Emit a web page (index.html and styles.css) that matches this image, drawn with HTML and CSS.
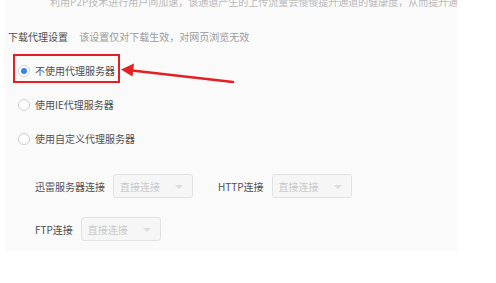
FILE: index.html
```html
<!DOCTYPE html>
<html lang="zh-CN">
<head>
<meta charset="utf-8">
<title>下载代理设置</title>
<link rel="stylesheet" href="styles.css">
</head>
<body>
<div class="page">
  <div class="panel">
    <div class="intro">利用P2P技术进行用户间加速，该通道产生的上传流量会慢慢提升通道的健康度，从而提升通道的加速效果</div>
    <div class="section-head">
      <span class="title">下载代理设置</span>
      <span class="hint">该设置仅对下载生效，对网页浏览无效</span>
    </div>
    <div class="radio-list">
      <div class="radio-row"><span class="radio checked"></span><span class="radio-label">不使用代理服务器</span></div>
      <div class="radio-row"><span class="radio"></span><span class="radio-label">使用IE代理服务器</span></div>
      <div class="radio-row"><span class="radio"></span><span class="radio-label">使用自定义代理服务器</span></div>
    </div>
    <div class="field-row first">
      <div class="field">
        <span class="field-label">迅雷服务器连接</span>
        <div class="select"><span class="select-text">直接连接</span><span class="caret"></span></div>
      </div>
      <div class="field spaced">
        <span class="field-label">HTTP连接</span>
        <div class="select"><span class="select-text">直接连接</span><span class="caret"></span></div>
      </div>
    </div>
    <div class="field-row second">
      <div class="field">
        <span class="field-label">FTP连接</span>
        <div class="select"><span class="select-text">直接连接</span><span class="caret"></span></div>
      </div>
    </div>
  </div>
  <div class="mark-box"></div>
  <svg class="mark-arrow" width="130" height="30" viewBox="0 0 130 30">
    <line x1="113" y1="26" x2="12" y2="14.5" stroke="#e51f26" stroke-width="2.6" stroke-linecap="round"/>
    <polygon points="1,13.5 14,7.5 12.5,20.5" fill="#e51f26"/>
  </svg>
</div>
</body>
</html>
```
FILE: styles.css
```css
html, body {
  margin: 0;
  padding: 0;
  background: #ffffff;
}
body {
  font-family: "Noto Sans CJK SC", "Noto Sans", sans-serif;
  font-size: 10px;
  color: #505050;
}
.page {
  position: relative;
  width: 496px;
  height: 283px;
}
.panel {
  margin-left: 5px;
  width: 452px;
  height: 251px;
  background: #fafafa;
  overflow: hidden;
}
.intro {
  margin-top: -5px;
  padding-left: 45px;
  line-height: 14px;
  height: 14px;
  white-space: nowrap;
  color: #b9b9b9;
}
.section-head {
  margin-top: 21px;
  padding-left: 3px;
  line-height: 14px;
  height: 14px;
  white-space: nowrap;
}
.section-head .title {
  color: #505050;
}
.section-head .hint {
  margin-left: 9px;
  color: #9a9a9a;
}
.radio-list {
  margin-top: 17px;
  padding-left: 13px;
  display: flex;
  flex-direction: column;
  gap: 14px;
}
.radio-row {
  display: flex;
  align-items: center;
  height: 20px;
  gap: 5px;
}
.radio {
  box-sizing: border-box;
  width: 12px;
  height: 12px;
  border-radius: 50%;
  border: 1px solid #cfcfcf;
  background: #fff;
  display: flex;
  align-items: center;
  justify-content: center;
}
.radio.checked {
  border-color: #d6d6d6;
}
.radio.checked::after {
  content: "";
  width: 6px;
  height: 6px;
  border-radius: 50%;
  background: #3b7ff2;
}
.radio-label {
  color: #505050;
  line-height: 14px;
}
.field-row {
  display: flex;
  align-items: center;
  padding-left: 30px;
  height: 24px;
}
.field-row.first {
  margin-top: 25px;
}
.field-row.second {
  margin-top: 19px;
}
.field {
  display: flex;
  align-items: center;
  gap: 8px;
}
.field.spaced {
  margin-left: 25px;
}
.field-label {
  color: #505050;
  white-space: nowrap;
}
.select {
  box-sizing: border-box;
  position: relative;
  width: 80px;
  height: 24px;
  border: 1px solid #e2e2e2;
  border-radius: 3px;
  background: #f6f6f6;
  display: flex;
  align-items: center;
  padding-left: 6px;
}
.select-text {
  color: #c9c9c9;
}
.caret {
  position: absolute;
  left: 61px;
  top: 10px;
  width: 0;
  height: 0;
  border-left: 4px solid transparent;
  border-right: 4px solid transparent;
  border-top: 4px solid #dcdcdc;
}
.mark-box {
  position: absolute;
  left: 13px;
  top: 54px;
  width: 107px;
  height: 29px;
  box-sizing: border-box;
  border: 2.5px solid #e31e24;
}
.mark-arrow {
  position: absolute;
  left: 120px;
  top: 56px;
}
```
